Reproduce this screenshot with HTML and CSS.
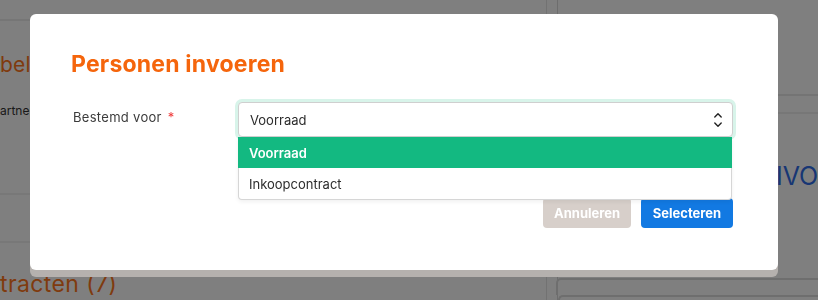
FILE: index.html
```html
<!DOCTYPE html>
<html lang="nl">
<head>
<meta charset="utf-8">
<title>Personen invoeren</title>
<link rel="stylesheet" href="styles.css">
</head>
<body>
<div class="page">
  <div class="col-left">
    <section class="card card-top">
      <h2 class="bg-title">beli</h2>
      <p class="bg-text">artner</p>
    </section>
    <section class="card card-mid"></section>
    <h2 class="bg-title bg-title-2">tracten (7)</h2>
  </div>
  <div class="col-right">
    <div class="strip"></div>
    <div class="right-panel">
      <h2 class="bg-blue">IVO</h2>
    </div>
    <div class="right-box"></div>
    <div class="right-box right-box-2"></div>
  </div>
</div>

<div class="overlay"></div>

<div class="modal" role="dialog">
  <h1 class="modal-title">Personen invoeren</h1>
  <div class="field">
    <label class="field-label">Bestemd voor <span class="req">*</span></label>
    <div class="select-wrap">
      <div class="select">
        <span>Voorraad</span>
        <svg class="chev" width="10" height="18" viewBox="0 0 10 18" fill="none" stroke="#222" stroke-width="1.4" stroke-linecap="round" stroke-linejoin="round">
          <path d="M1.8 6 L5 2.8 L8.2 6"/>
          <path d="M1.8 12 L5 15.2 L8.2 12"/>
        </svg>
      </div>
      <ul class="dropdown">
        <li class="opt opt-active">Voorraad</li>
        <li class="opt">Inkoopcontract</li>
      </ul>
    </div>
  </div>
  <div class="actions">
    <button class="btn btn-cancel">Annuleren</button>
    <button class="btn btn-primary">Selecteren</button>
  </div>
</div>
</body>
</html>
```

FILE: styles.css
```css
* { box-sizing: border-box; }

html, body {
  margin: 0;
  padding: 0;
  width: 818px;
  height: 300px;
  overflow: hidden;
  background: #ffffff;
  font-family: Inter, "Open Sans", "Liberation Sans", sans-serif;
}

/* ---------- background page ---------- */
.page {
  display: grid;
  grid-template-columns: 547px 271px;
  height: 300px;
}

.col-left {
  border-right: 1px solid #e4e4e4;
  display: flex;
  flex-direction: column;
}

.card {
  border-top: 2px solid #ececec;
}

.card-top {
  margin-top: 19px;
  height: 174px;
  padding-top: 30px;
}

.card-mid {
  border-top: 2px solid #f0f0f0;
  height: 50px;
  border-bottom: 2px solid #f0f0f0;
}

.bg-title {
  margin: 0;
  font-weight: 400;
  font-size: 21px;
  line-height: 28px;
  color: #ff761c;
  letter-spacing: 0.2px;
}

.bg-title-2 {
  margin-top: 28px;
  font-size: 23px;
  line-height: 26px;
  letter-spacing: 0.4px;
}

.bg-text {
  margin: 24px 0 0 0;
  font-size: 12px;
  color: #333;
}

.col-right {
  display: flex;
  flex-direction: column;
  margin-left: 10px;
  border-left: 1px solid #dadada;
}

.strip {
  margin-top: 94px;
  height: 20px;
  border-top: 2px solid #e8e8e8;
  border-bottom: 2px solid #eeeeee;
}

.right-panel {
  height: 164px;
  padding: 47px 0 0 218px;
}

.bg-blue {
  margin: 0;
  font-weight: 400;
  font-size: 25px;
  line-height: 30px;
  color: #2f6de8;
  white-space: nowrap;
}

.right-box {
  margin-left: -2px;
  border-top: 2px solid #dddddd;
  border-left: 2px solid #dddddd;
  height: 17px;
  border-radius: 5px 0 0 0;
}

.right-box-2 {
  margin-left: 0;
}

/* ---------- overlay + modal ---------- */
.overlay {
  position: fixed;
  inset: 0;
  background: rgba(0, 0, 0, 0.5);
}

.modal {
  position: absolute;
  left: 30px;
  top: 14px;
  width: 748px;
  height: 256px;
  background: #ffffff;
  border-radius: 6px;
  box-shadow: 0 7px 0 #b5b1ae;
  padding: 37px 45px 0 41px;
}

.modal-title {
  margin: 0;
  font-size: 23px;
  line-height: 27px;
  font-weight: 700;
  color: #f5650c;
  letter-spacing: 0.2px;
}

.field {
  display: grid;
  grid-template-columns: 167px 1fr;
  margin-top: 24px;
}

.field-label {
  padding-top: 5px;
  padding-left: 2px;
  font-size: 13px;
  line-height: 20px;
  color: #3b3b3b;
  letter-spacing: 0.3px;
}

.req {
  color: #ef3b3b;
  margin-left: 2px;
}

.select-wrap {
  position: relative;
}

.select {
  height: 35px;
  border: 1px solid #cfcfcf;
  border-radius: 4px;
  box-shadow: 0 0 0 3px #d8f4ea;
  display: flex;
  align-items: center;
  justify-content: space-between;
  padding: 0 9px 0 11px;
  font-size: 13px;
  color: #2c2c2c;
  background: #fff;
}

.chev {
  display: block;
}

.dropdown {
  position: absolute;
  top: 35px;
  left: 0;
  right: 1px;
  margin: 0;
  padding: 0;
  list-style: none;
  background: #fff;
  border: 1px solid #d6d6d6;
  border-top: none;
  border-radius: 0 0 4px 4px;
  box-shadow: 0 2px 4px rgba(0, 0, 0, 0.06);
  z-index: 2;
}

.opt {
  height: 31px;
  display: flex;
  align-items: center;
  padding-left: 10px;
  font-size: 13px;
  color: #2c2c2c;
}

.opt-active {
  background: #13b981;
  color: #ffffff;
  font-weight: 600;
  margin: 0 -1px;
  padding-left: 11px;
}

.actions {
  display: flex;
  justify-content: flex-end;
  gap: 10px;
  margin-top: 61px;
}

.btn {
  height: 30px;
  border: none;
  border-radius: 4px;
  padding: 0 11px;
  font-family: inherit;
  font-size: 13px;
  font-weight: 700;
  color: #ffffff;
}

.btn-cancel {
  background: #d7cfca;
  width: 88px;
}

.btn-primary {
  background: #1279e2;
  width: 92px;
}
```
